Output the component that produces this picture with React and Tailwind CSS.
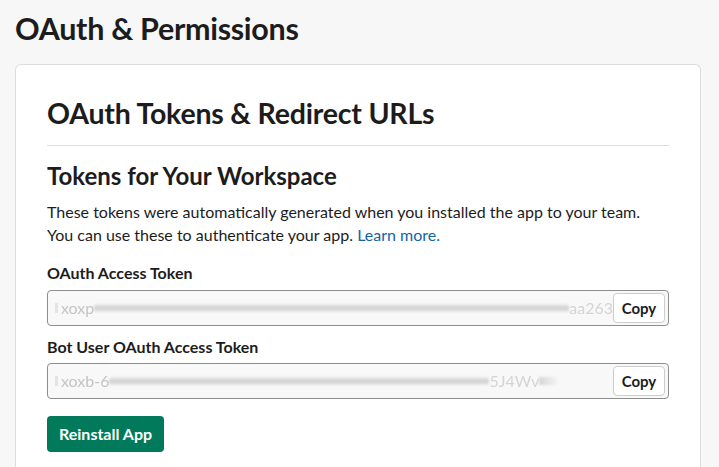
import React from 'react'

function TokenField({ prefix, tail, smearClass, after }) {
  return (
    <div className="relative flex h-[36px] items-center overflow-hidden rounded-[4px] border border-[#8d8d8d] bg-[#f8f8f8]">
      <div className="flex flex-1 items-center overflow-hidden pl-[7px] text-[16px] text-[#c4c4c4]">
        <div className="mr-[3px] h-[10px] w-[3px] bg-[#e4e4e4] blur-[0.5px]" />
        <span className="blur-[0.4px]">{prefix}</span>
        <div className={`h-[8px] ${smearClass} rounded-[2px] bg-gradient-to-b from-[#eeeeee] via-[#d0d0d0] to-[#e8e8e8] blur-[1.2px]`} />
        <span className="text-[#d4d4d4] blur-[0.6px]">{tail}</span>
        {after && <div className="h-[8px] w-[18px] bg-gradient-to-r from-[#d6d6d6] to-[#f3f3f3] blur-[1px]" />}
      </div>
      <button className="mr-[3px] h-[30px] w-[52px] shrink-0 rounded-[4px] border border-[#cccccc] bg-white text-[15px] font-bold text-[#1d1c1d]">
        Copy
      </button>
    </div>
  )
}

export default function App() {
  return (
    <div className="min-h-screen overflow-hidden bg-[#f7f7f7] pl-[15px] pr-[18px] pt-[10px] text-[#1d1c1d] font-['Lato','Noto_Sans',sans-serif]">
      <h1 className="text-[30.5px] font-bold leading-[36px] tracking-[-0.3px]">OAuth &amp; Permissions</h1>

      <div className="mt-[18px] h-[420px] rounded-t-[6px] border border-b-0 border-[#dddddd] bg-white px-[31px] pt-[30px]">
        <h2 className="pb-[14px] text-[28.5px] font-bold leading-[36px] tracking-[-0.2px]">OAuth Tokens &amp; Redirect URLs</h2>
        <div className="border-t border-[#dddddd]" />

        <h3 className="mt-[15px] text-[24px] font-bold leading-[30px]">Tokens for Your Workspace</h3>
        <p className="mt-[9px] text-[16px] leading-[23px]">
          These tokens were automatically generated when you installed the app to your team.
          <br />
          You can use these to authenticate your app. <a href="#" className="text-[#1264a3]">Learn more.</a>
        </p>

        <div className="mt-[16px] text-[16px] font-bold leading-[22px]">OAuth Access Token</div>
        <div className="mt-[6px]">
          <TokenField prefix="xoxp" tail="aa263" smearClass="flex-1" />
        </div>

        <div className="mt-[10px] text-[16px] font-bold leading-[22px]">Bot User OAuth Access Token</div>
        <div className="mt-[5px]">
          <TokenField prefix="xoxb-6" tail="5J4Wv" smearClass="w-[380px]" after />
        </div>

        <button className="mt-[17px] h-[36px] rounded-[4px] bg-[#007a5a] px-[12px] text-[16px] font-bold text-white">
          Reinstall App
        </button>
      </div>
    </div>
  )
}
